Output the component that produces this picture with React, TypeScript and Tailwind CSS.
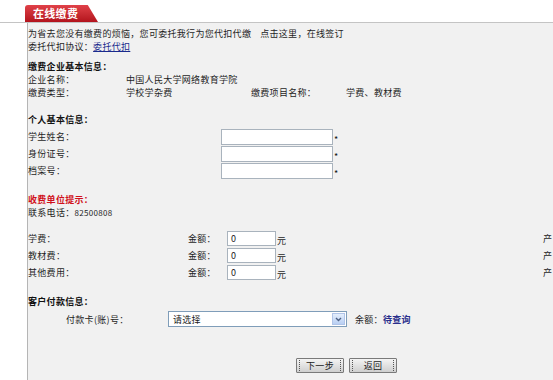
import React from "react";

const Btn = ({ label }: { label: string }) => (
  <div className="w-[48px] h-[15px] border border-[#7a7a7a] bg-gradient-to-b from-[#f4f4f4] to-[#cfcfcf] flex items-center justify-between px-[2px] rounded-[1px]">
    <span className="h-[11px] border-l border-dotted border-[#555]" />
    <span className="leading-[13px] text-[#1a1a1a]">{label}</span>
    <span className="h-[11px] border-l border-dotted border-[#555]" />
  </div>
);

const Input = ({ w, value }: { w: string; value?: string }) => (
  <div className={`${w} h-full bg-white border border-[#a9b3bd] flex items-center pl-[3px] text-[#1a1a1a]`}>
    {value}
  </div>
);

export default function App() {
  const fees = ["学费：", "教材费：", "其他费用："];
  return (
    <div className="w-[553px] h-[380px] bg-white overflow-hidden font-['Noto_Sans_CJK_SC','Noto_Sans',sans-serif] text-[9px] leading-[13px] text-[#1e1e1e]">
      <div className="h-[23px] pl-[25px] pt-[5px] border-b border-[#c4c4c4]">
        <div className="w-[73px] h-[17px] rounded-tl-[3px] bg-gradient-to-b from-[#e04048] to-[#b3121c] [clip-path:polygon(0_0,86%_0,100%_100%,0_100%)] pl-[8px] flex items-center text-white font-bold text-[11px] tracking-[0.3px]">
          在线缴费
        </div>
      </div>
      <div className="ml-[27px] h-[357px] border-l border-[#b5b5b5] bg-[#f1f1f1] tracking-[0.3px]">
        <div className="pt-[4px] h-[17px] flex">
          <span>为省去您没有缴费的烦恼，您可委托我行为您代扣代缴</span>
          <span className="ml-[9px]">点击这里，在线签订</span>
        </div>
        <div className="h-[13px]">
          委托代扣协议：<span className="text-[#1a2a8c] underline">委托代扣</span>
        </div>
        <div className="mt-[7px] h-[13px] font-bold text-[#111]">缴费企业基本信息：</div>
        <div className="h-[13px] flex">
          <span className="w-[98px]">企业名称：</span>
          <span>中国人民大学网络教育学院</span>
        </div>
        <div className="h-[13px] flex">
          <span className="w-[98px]">缴费类型：</span>
          <span className="w-[125px]">学校学杂费</span>
          <span className="w-[95px]">缴费项目名称：</span>
          <span>学费、教材费</span>
        </div>
        <div className="mt-[14px] h-[13px] font-bold text-[#111]">个人基本信息：</div>
        <div className="mt-[2px] flex flex-col">
          {["学生姓名：", "身份证号：", "档案号："].map((l) => (
            <div key={l} className="h-[17px] flex items-center">
              <span className="w-[193px]">{l}</span>
              <div className="h-[16px] flex">
                <Input w="w-[112px]" />
              </div>
              <span className="ml-[1px] self-end leading-[10px] text-[#111]">*</span>
            </div>
          ))}
        </div>
        <div className="mt-[14px] h-[13px] font-bold text-[#d0101a]">收费单位提示：</div>
        <div className="h-[13px]">
          联系电话：<span className="text-[8px]">82500808</span>
        </div>
        <div className="mt-[11px] flex flex-col">
          {fees.map((l) => (
            <div key={l} className="h-[17px] flex items-center">
              <span className="w-[160px]">{l}</span>
              <span className="w-[39px]">金额：</span>
              <div className="h-[15px] flex">
                <Input w="w-[49px]" value="0" />
              </div>
              <span className="ml-[1px] self-end leading-[12px]">元</span>
              <span className="ml-auto mr-[1px] tracking-normal">产</span>
            </div>
          ))}
        </div>
        <div className="mt-[14px] h-[13px] font-bold text-[#111]">客户付款信息：</div>
        <div className="mt-[3px] h-[16px] flex items-center">
          <span className="ml-[38px] w-[102px]">付款卡(账)号：</span>
          <div className="w-[179px] h-[16px] bg-white border border-[#7f9db9] flex items-center justify-between pl-[4px] pr-[1px]">
            <span className="text-[#1a1a1a]">请选择</span>
            <div className="w-[13px] h-[12px] bg-gradient-to-b from-[#e4eefc] to-[#b9cff3] border border-[#b0c4e8] flex items-center justify-center">
              <svg width="7" height="5" viewBox="0 0 7 5">
                <path d="M1 1 L3.5 3.5 L6 1" fill="none" stroke="#4d6185" strokeWidth="1.4" />
              </svg>
            </div>
          </div>
          <span className="ml-[8px]">余额：</span>
          <span className="text-[#2a2f8c] font-bold">待查询</span>
        </div>
        <div className="mt-[31px] flex gap-[5px] pl-[268px]">
          <Btn label="下一步" />
          <Btn label="返回" />
        </div>
      </div>
    </div>
  );
}
